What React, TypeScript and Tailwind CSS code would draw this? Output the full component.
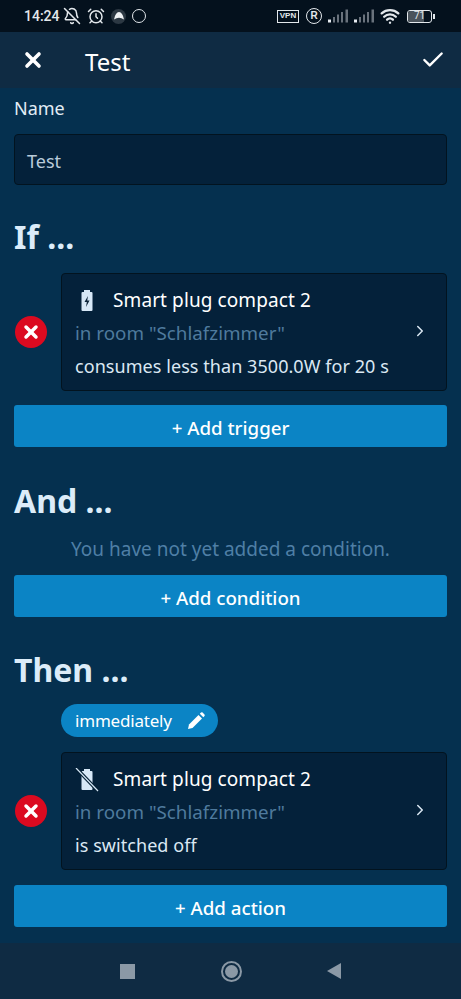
import { X, Check, AlarmClock, BellOff, Wifi, ChevronRight } from 'lucide-react'

const font = "font-['Noto_Sans',sans-serif]"

function Signal() {
  return (
    <svg width="20" height="14" viewBox="0 0 20 14">
      <rect x="0" y="10.5" width="3" height="3" fill="#e8edf2" />
      <rect x="5" y="8" width="2" height="5.5" fill="#69727c" />
      <rect x="9" y="5.5" width="2" height="8" fill="#69727c" />
      <rect x="13" y="3" width="2" height="10.5" fill="#69727c" />
      <rect x="17.5" y="0.5" width="2.5" height="13" fill="#69727c" />
    </svg>
  )
}

function StatusBar() {
  return (
    <div className="h-8 shrink-0 bg-[#04111d] flex items-center pl-6 pr-[26px] text-[#e3e8ec]">
      <span className="text-[14px] font-medium w-[35px] leading-none font-['Roboto',sans-serif]">14:24</span>
      <BellOff size={18} className="ml-[4px]" />
      <AlarmClock size={18} className="ml-[6px]" />
      <div className="ml-[6px] w-[15px] h-[15px] rounded-full bg-[#2c3843] flex items-center justify-center">
        <svg width="12" height="10" viewBox="0 0 12 10">
          <path d="M1 8.5 Q2.5 1 6 1 Q9.5 1 11 8.5 Q6 5 1 8.5 Z" fill="#eef1f4" />
        </svg>
      </div>
      <div className="ml-[6px] w-[14px] h-[14px] rounded-full border-[1.5px] border-[#e3e8ec]" />
      <div className="ml-auto flex items-center">
        <div className="w-[22px] h-[13px] border-[1.5px] border-[#e3e8ec] text-[8px] font-bold flex items-center justify-center leading-none font-['Liberation_Sans',sans-serif]">
          VPN
        </div>
        <div className="ml-[7px] w-4 h-4 rounded-full border-[1.5px] border-[#e3e8ec] text-[10px] font-bold flex items-center justify-center leading-none font-['Liberation_Sans',sans-serif]">
          R
        </div>
        <div className="ml-[6px] flex gap-[6px]">
          <Signal />
          <Signal />
        </div>
        <Wifi size={20} strokeWidth={2.8} className="ml-[6px]" />
        <div className="ml-[7px] w-[25px] h-[13px] border-[1.5px] border-[#e3e8ec] rounded-[3px] flex items-center justify-center relative overflow-hidden">
          <div className="absolute left-0 top-0 bottom-0 w-[71%] bg-[#4b545c]" />
          <span className="relative text-[10px] leading-none font-['Roboto',sans-serif]">71</span>
        </div>
        <div className="w-[2px] h-[5px] bg-[#e3e8ec] ml-[1px]" />
      </div>
    </div>
  )
}

function Header() {
  return (
    <div className="h-14 shrink-0 bg-[#0f2b43] flex items-center pl-[21px] pr-[15px] text-white">
      <X size={24} strokeWidth={3.6} />
      <span className="ml-[40px] pt-[3px] text-[24px] leading-none">Test</span>
      <Check size={26} strokeWidth={2.2} className="ml-auto" />
    </div>
  )
}

function Remove() {
  return (
    <div className="w-8 h-8 rounded-full bg-[#db0a20] flex items-center justify-center shrink-0">
      <X size={20} strokeWidth={4.2} className="text-white" />
    </div>
  )
}

function PlugIcon({ off }: { off?: boolean }) {
  return (
    <svg width="24" height="24" viewBox="0 0 24 24" className="shrink-0">
      <rect x="9" y="1" width="6" height="3" fill="#d7e8f7" />
      <rect x="6.5" y="3" width="11" height="19" rx="1" fill="#d7e8f7" />
      {off ? (
        <path d="M1 0 L23 23" stroke="#041f35" strokeWidth="3.5" />
      ) : (
        <path d="M13 7 L9.5 13 H11.8 L11 18 L14.5 11.5 H12.2 Z" fill="#0a2238" />
      )}
      {off && <path d="M1 0 L23 23" stroke="#d7e8f7" strokeWidth="1.2" />}
    </svg>
  )
}

function RuleCard({ off, detail }: { off?: boolean; detail: string }) {
  return (
    <div className="flex items-center">
      <div className="w-[47px] shrink-0 flex pl-[1px]">
        <Remove />
      </div>
      <div className="flex-1 h-[118px] bg-[#04213a] border border-[#02131f] rounded-[4px] pl-[13px] pr-[17px] flex items-center">
        <div className="flex-1 min-w-0 pt-[3px]">
          <div className="flex items-center h-[33px] text-[19px] text-white">
            <PlugIcon off={off} />
            <span className="ml-[14px] tracking-[0.1px]">Smart plug compact 2</span>
          </div>
          <div className="h-[33px] flex items-center text-[18.8px] text-[#4f7a9d]">in room "Schlafzimmer"</div>
          <div className="h-[33px] flex items-center text-[18px] tracking-[0.06px] text-[#dbe8f3] whitespace-nowrap">
            {detail}
          </div>
        </div>
        <ChevronRight size={18} strokeWidth={2} className="text-[#dbe8f3] shrink-0 -mt-[2px]" />
      </div>
    </div>
  )
}

function AddButton({ label }: { label: string }) {
  return (
    <div className="h-[42px] pt-[4px] bg-[#0b84c5] rounded-[3px] flex items-center justify-center text-white text-[18.7px] font-medium">
      {label}
    </div>
  )
}

function Heading({ children }: { children: string }) {
  return <h2 className="text-[32px] leading-none font-bold text-[#dcecf9]">{children}</h2>
}

export default function App() {
  return (
    <div className={`w-[461px] h-[999px] flex flex-col overflow-hidden bg-[#05304f] ${font}`}>
      <StatusBar />
      <Header />
      <div className="flex-1 px-[14px]">
        <div className="mt-[7px] h-[26px] flex items-center text-[18px] text-[#e2edf6]">Name</div>
        <div className="mt-[13px] h-[51px] pt-[3px] bg-[#04213a] border border-[#02131f] rounded-[4px] px-3 flex items-center text-[18px] text-[#b9cbda]">
          Test
        </div>
        <div className="mt-[36px]">
          <Heading>If ...</Heading>
        </div>
        <div className="mt-[20px]">
          <RuleCard detail="consumes less than 3500.0W for 20 s" />
        </div>
        <div className="mt-[14px]">
          <AddButton label="+ Add trigger" />
        </div>
        <div className="mt-[38px]">
          <Heading>And ...</Heading>
        </div>
        <div className="mt-[20px] h-6 flex items-center justify-center text-[19px] text-[#4f7fa6]">
          You have not yet added a condition.
        </div>
        <div className="mt-[14px]">
          <AddButton label="+ Add condition" />
        </div>
        <div className="mt-[37px]">
          <Heading>Then ...</Heading>
        </div>
        <div className="ml-[47px] mt-[18px] w-[157px] h-[33px] rounded-full bg-[#0b84c5] flex items-center pl-[14px] text-white text-[17px]">
          <span className="w-[96px] whitespace-nowrap tracking-[-0.2px]">immediately</span>
          <svg width="20" height="20" viewBox="0 0 20 20" className="ml-[15px]">
            <path d="M2 18 L3 13.5 L12.5 4 L16 7.5 L6.5 17 Z" fill="#ffffff" />
            <path d="M13.8 2.7 L15 1.5 Q15.8 0.9 16.6 1.5 L18.5 3.4 Q19.1 4.2 18.5 5 L17.3 6.2 Z" fill="#ffffff" />
          </svg>
        </div>
        <div className="mt-[15px]">
          <RuleCard off detail="is switched off" />
        </div>
        <div className="mt-[15px]">
          <AddButton label="+ Add action" />
        </div>
      </div>
      <div className="h-[56px] shrink-0 bg-[#0f2b43] flex items-center justify-center">
        <div className="flex items-center ml-[0px]">
          <div className="w-[15px] h-[15px] bg-[#8b99a6] mr-[86px]" />
          <div className="w-[21px] h-[21px] rounded-full border-2 border-[#8b99a6] flex items-center justify-center mr-[85px]">
            <div className="w-[13px] h-[13px] rounded-full bg-[#8b99a6]" />
          </div>
          <svg width="14" height="16" viewBox="0 0 14 16">
            <path d="M0 8 L14 0 V16 Z" fill="#8b99a6" />
          </svg>
        </div>
      </div>
    </div>
  )
}
